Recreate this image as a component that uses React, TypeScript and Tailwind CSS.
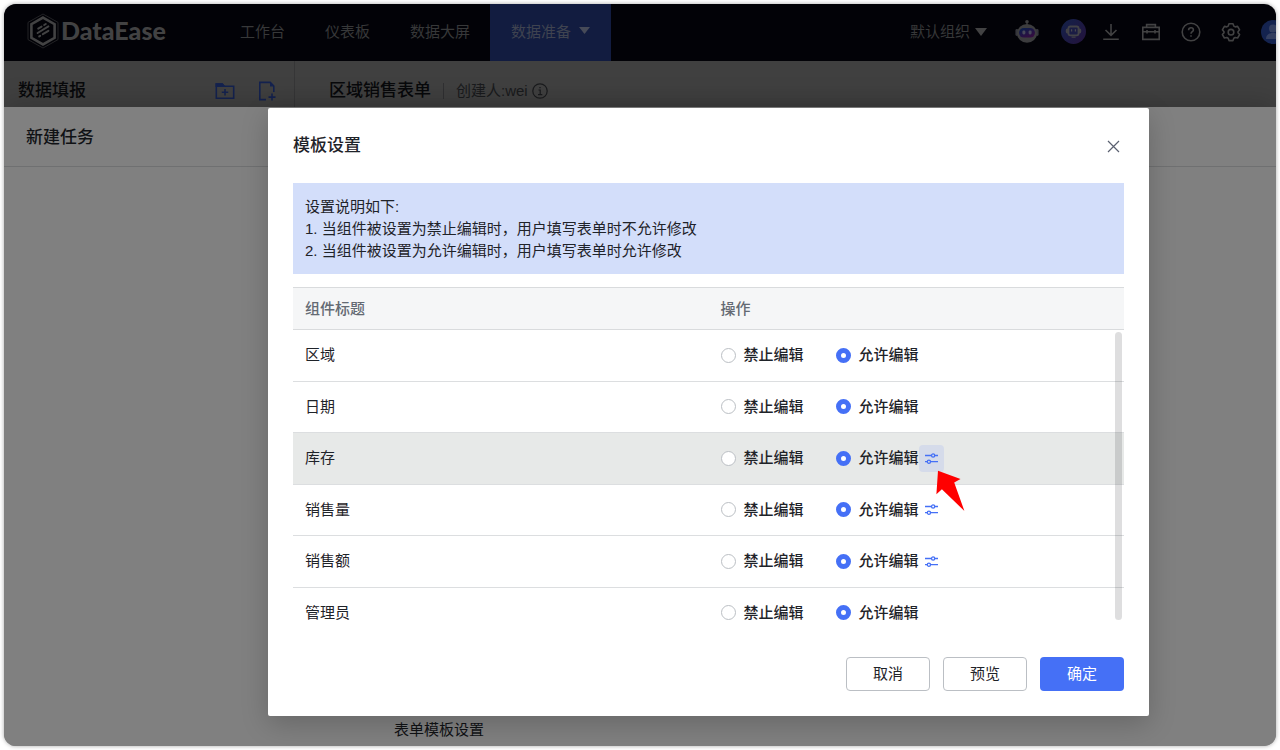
import React from 'react';

type Row = { title: string; configurable?: boolean; active?: boolean };

const ROWS: Row[] = [
  { title: '区域' },
  { title: '日期' },
  { title: '库存', configurable: true, active: true },
  { title: '销售量', configurable: true },
  { title: '销售额', configurable: true },
  { title: '管理员' },
];

const NAV_ITEMS = ['工作台', '仪表板', '数据大屏'];

function Logo() {
  return (
    <svg className="h-9 w-8 shrink-0" viewBox="0 0 32 36" fill="none">
      <path d="M16 1 31 9.4v17.2L16 35 1 26.6V9.4L16 1Z" stroke="#2b2b2d" strokeWidth="0.8" />
      <path d="M16 4.6 27.6 11.2v13.6L16 31.4 4.4 24.8V11.2L16 4.6Z" stroke="#424243" strokeWidth="2.6" />
      <g stroke="#424243" strokeWidth="2" strokeLinecap="round">
        <path d="m11.2 15.6 3.4-2M17.2 12l1.6-1M10.6 20l10.8-6.6M12.2 23.4l1-.6M15.8 21.2l5.6-3.4" />
      </g>
    </svg>
  );
}

function Caret({ className }: { className: string }) {
  return (
    <svg className={className} viewBox="0 0 12 8" fill="currentColor" preserveAspectRatio="none">
      <path d="M0 0h12L6 8 0 0Z" />
    </svg>
  );
}

function RobotIcon() {
  return (
    <svg className="size-6" viewBox="0 0 24 24" fill="none">
      <circle cx="12" cy="1.8" r="1.8" fill="#3c3c3e" />
      <path d="M11.4 3h1.2v3h-1.2z" fill="#3c3c3e" />
      <rect x="0.4" y="9" width="3" height="7" rx="1.4" fill="#34353b" />
      <rect x="20.6" y="9" width="3" height="7" rx="1.4" fill="#34353b" />
      <ellipse cx="12" cy="13.4" rx="10" ry="9.4" fill="#3c3c3e" />
      <rect x="4" y="8" width="16" height="9.6" rx="4.8" fill="url(#robot-face)" />
      <rect x="7.4" y="10.4" width="3" height="4" rx="1.3" fill="#48495a" />
      <rect x="13.6" y="10.4" width="3" height="4" rx="1.3" fill="#48495a" />
      <defs>
        <linearGradient id="robot-face" gradientUnits="userSpaceOnUse" x1="9" y1="8" x2="13" y2="18">
          <stop stopColor="#0c1d4a" />
          <stop offset="1" stopColor="#340c40" />
        </linearGradient>
      </defs>
    </svg>
  );
}

function ChatIcon() {
  return (
    <svg className="size-[25px]" viewBox="0 0 25 25" fill="none">
      <circle cx="12.5" cy="12.5" r="12.5" fill="url(#chat-bg)" />
      <rect x="4.8" y="9.4" width="15.4" height="5" rx="1.6" fill="#424247" />
      <rect x="6.6" y="6.6" width="11.8" height="10.6" rx="2.6" fill="#424247" />
      <rect x="8.4" y="8.4" width="8.2" height="7" rx="1.2" fill="#1a1c44" />
      <path d="M10.6 10.2v2.2M14.4 10.2v2.2" stroke="#48484e" strokeWidth="1.2" />
      <path d="M10.600 18.200h4" stroke="#424247" strokeWidth="1.2" />
      <defs>
        <linearGradient id="chat-bg" gradientUnits="userSpaceOnUse" x1="2" y1="4" x2="23" y2="21">
          <stop stopColor="#152048" />
          <stop offset="1" stopColor="#22143e" />
        </linearGradient>
      </defs>
    </svg>
  );
}

function LineIcon({ children }: { children: React.ReactNode }) {
  return (
    <svg className="size-5" viewBox="0 0 20 20" fill="none" stroke="currentColor" strokeWidth="1.6">
      {children}
    </svg>
  );
}

function SettingIcon() {
  return (
    <svg className="h-[13px] w-[15px]" viewBox="0 0 15 13" fill="none" stroke="#4570f6" strokeWidth="1.3">
      <path d="M1 3.5h6.4M10.8 3.5H14M1 9.7h2.2M6.6 9.7H14" />
      <circle cx="9.1" cy="3.5" r="1.6" />
      <circle cx="4.9" cy="9.7" r="1.6" />
    </svg>
  );
}

function Pointer() {
  return (
    <svg className="pointer-events-none absolute top-[25px] left-[17px] z-10 h-[42px] w-[29px]" viewBox="0 0 29 42">
      <path d="M2 .7 24.5 9l-6.3 3.4L28.4 41 5.9 19.3.4 24.3 2 .7Z" fill="#ff0000" />
    </svg>
  );
}

function Radio({ name, label, checked }: { name: string; label: string; checked?: boolean }) {
  return (
    <label className="flex items-center gap-2 font-medium">
      <input
        type="radio"
        name={name}
        defaultChecked={checked}
        className="size-[15px] shrink-0 appearance-none rounded-full border border-[#bbbfc4] bg-white checked:border-[5px] checked:border-[#4570f6]"
      />
      {label}
    </label>
  );
}

function TopBar() {
  return (
    <header className="flex h-[57px] shrink-0 items-center bg-[#020207] text-[15px] text-[#373839]">
      <div className="flex items-center gap-0.5 pb-1 pl-[23px] text-[#424243]">
        <Logo />
        <span className="font-['Lato'] text-[25px] leading-none font-black">DataEase</span>
      </div>
      <nav className="ml-auto flex h-full items-center">
        {NAV_ITEMS.map((item) => (
          <a key={item} href="#" className="px-5 whitespace-nowrap">
            {item}
          </a>
        ))}
        <a href="#" className="flex h-full items-center gap-2 bg-[#121c40] px-[21px] whitespace-nowrap text-[#3f4350]">
          数据准备
          <Caret className="mb-1 h-[7px] w-[11px] text-[#464a58]" />
        </a>
      </nav>
      <div className="ml-[299px] -mr-[9px] flex shrink-0 items-center pb-0.5 text-[#424243]">
        <button type="button" className="flex items-center gap-[5px] pt-0.5 whitespace-nowrap text-[#373839]">
          默认组织
          <Caret className="mb-0.5 h-2 w-3 text-[#424243]" />
        </button>
        <button type="button" className="ml-7" aria-label="助手">
          <RobotIcon />
        </button>
        <button type="button" className="ml-[22px]" aria-label="问数">
          <ChatIcon />
        </button>
        <div className="ml-[15px] flex items-center gap-5">
          <button type="button" aria-label="下载">
            <LineIcon>
              <path d="M10 2v11M4.5 8 10 13.4 15.5 8M2.2 17.2h15.6" />
            </LineIcon>
          </button>
          <button type="button" aria-label="工具箱">
            <LineIcon>
              <path d="M1.8 5.4h16.4v12H1.8zM5.6 5.4V2.6h8.8v2.8M1.8 9.8h16.4M6 8v3.6M14 8v3.6" />
            </LineIcon>
          </button>
          <button type="button" aria-label="帮助">
            <LineIcon>
              <circle cx="10" cy="10" r="8.8" />
              <path d="M7.6 8.2c0-1.5 1-2.5 2.4-2.5s2.4.9 2.4 2.2c0 1.8-2.4 1.9-2.4 3.9M10 13.2v1.6" />
            </LineIcon>
          </button>
          <button type="button" aria-label="设置">
            <LineIcon>
              <path
                d="M8 1.8h4l.8 2.3 1.4.8 2.4-.5 2 3.4-1.6 1.9v1l1.6 1.9-2 3.4-2.4-.5-1.4.8-.8 2.3H8l-.8-2.3-1.4-.8-2.4.5-2-3.4 1.600-1.900v-1L1.400 7.800l2-3.400 2.400.5 1.400-.8L8 1.800Z"
                strokeLinejoin="round"
              />
              <circle cx="10" cy="10.2" r="2.8" />
            </LineIcon>
          </button>
          <button type="button" aria-label="用户">
            <svg className="size-6" viewBox="0 0 24 24">
              <circle cx="12" cy="12" r="12" fill="#14234f" />
              <circle cx="12" cy="8.4" r="4" fill="#343f60" />
              <path d="M5 19c0-4 3-6 7-6s7 2 7 6Z" fill="#343f60" />
            </svg>
          </button>
        </div>
      </div>
    </header>
  );
}

function SubBar() {
  return (
    <div className="h-[46px] shrink-0 overflow-hidden bg-[#404040]">
      <div className="flex h-[60px]">
        <div className="flex w-[291px] shrink-0 items-center border-r border-[#363637] pr-[17px] pl-[14px]">
          <h2 className="text-[17px] font-medium text-[#08090b]">数据填报</h2>
          <div className="ml-auto flex items-center gap-[22px] text-[#14224f]">
            <button type="button" aria-label="新建文件夹">
              <LineIcon>
                <path d="M1.3 17.2V3h6l1.8 2.2h9.6v12Z" />
                <path d="M1.3 3h6l1.8 2.2H1.3Z" fill="currentColor" />
                <path d="M10 8v6.4M6.8 11.2h6.4" />
              </LineIcon>
            </button>
            <button type="button" aria-label="新建表单">
              <LineIcon>
                <path d="M9 18.6H2.8V1.4h10.4l3.6 3.6v6M15 12.6v7M11.5 16.1h7" />
                <path d="M13 1.4v4h3.8Z" fill="currentColor" stroke="none" />
              </LineIcon>
            </button>
          </div>
        </div>
        <div className="flex items-center pl-[34px] whitespace-nowrap">
          <h1 className="text-[17px] font-medium text-[#08090b]">区域销售表单</h1>
          <span className="mx-3 h-4 w-px bg-[#303032]" />
          <span className="text-[15px] text-[#1a1b1d]">创建人:wei</span>
          <svg className="ml-1 size-4 text-[#1a1b1d]" viewBox="0 0 16 16" fill="none" stroke="currentColor" strokeWidth="1.2">
            <circle cx="8" cy="8" r="7.2" />
            <path d="M6.5 7h1.7v4.5M6 11.6h4.3M7.3 4.6h1.4" />
          </svg>
        </div>
      </div>
    </div>
  );
}

function TemplateDialog() {
  return (
    <section
      role="dialog"
      aria-label="模板设置"
      className="absolute top-[104px] right-[127px] left-[264px] rounded-xs bg-white p-[25px] text-[15px] text-[#1f2329] shadow-[0_8px_28px_rgba(0,0,0,0.2)]"
    >
      <div className="flex h-[26px] items-center justify-between">
        <h2 className="text-[17px] leading-[26px] font-medium">模板设置</h2>
        <button type="button" aria-label="关闭" className="mr-1">
          <svg className="size-[13px]" viewBox="0 0 13 13" stroke="#5a6070" strokeWidth="1.2">
            <path d="m1 1 11 11M12 1 1 12" />
          </svg>
        </button>
      </div>

      <div className="mt-6 bg-[#d3defa] px-3 pt-[13px] pb-3 leading-[22px]">
        <p>设置说明如下:</p>
        <p>1. 当组件被设置为禁止编辑时，用户填写表单时不允许修改</p>
        <p>2. 当组件被设置为允许编辑时，用户填写表单时允许修改</p>
      </div>

      <div className="relative mt-[13px] h-[335px] overflow-hidden">
        <table className="h-[352px] w-full table-fixed border-separate border-spacing-0 text-left">
          <thead>
            <tr className="h-[43px] bg-[#f5f6f7] text-[#646a73]">
              <th className="border-y border-[#d9dbdd] px-3 pt-0.5 pb-0 font-medium">组件标题</th>
              <th className="border-y border-[#d9dbdd] px-3 pt-0.5 pb-0 font-medium">操作</th>
            </tr>
          </thead>
          <tbody>
            {ROWS.map((row) => (
              <tr key={row.title} className={row.active ? 'bg-[#e7e9e8]' : ''}>
                <td className="border-b border-[#dcdee0] px-3">{row.title}</td>
                <td className="border-b border-[#dcdee0] px-3">
                  <div className="flex h-[27px] items-center whitespace-nowrap">
                    <Radio name={row.title} label="禁止编辑" />
                    <div className="ml-8 flex items-center">
                      <Radio name={row.title} label="允许编辑" checked />
                      {row.configurable && (
                        <button
                          type="button"
                          aria-label="编辑设置"
                          className={`relative flex h-[27px] w-[25px] items-center justify-center rounded ${
                            row.active ? 'bg-[#d5dbea]' : ''
                          }`}
                        >
                          <SettingIcon />
                          {row.active && <Pointer />}
                        </button>
                      )}
                    </div>
                  </div>
                </td>
              </tr>
            ))}
          </tbody>
        </table>
        <div className="absolute top-[45px] right-[2px] bottom-[2px] w-[7px] rounded-full bg-[#1f2329]/15" />
      </div>

      <div className="mt-[35px] flex justify-end gap-[13px]">
        <button type="button" className="h-[34px] w-[84px] rounded border border-[#bbbfc4] bg-white">
          取消
        </button>
        <button type="button" className="h-[34px] w-[84px] rounded border border-[#bbbfc4] bg-white">
          预览
        </button>
        <button type="button" className="h-[34px] w-[84px] rounded bg-[#4570f6] text-white">
          确定
        </button>
      </div>
    </section>
  );
}

export default function App() {
  return (
    <div className="h-screen bg-white p-1 font-['Liberation_Sans','Noto_Sans_CJK_SC',sans-serif]">
      <div className="relative flex h-full flex-col overflow-hidden rounded-xl bg-[#808080] shadow-[0_0_4px_rgba(0,0,0,0.35)]">
        <TopBar />
        <SubBar />
        <main className="flex grow flex-col bg-[#808080] shadow-[0_-6px_24px_rgba(0,0,0,0.16)]">
          <div className="flex h-[60px] shrink-0 items-center border-b border-[#6f7071] px-[22px] pt-0.5">
            <h2 className="text-[17px] font-medium text-[#101215]">新建任务</h2>
          </div>
          <p className="mt-auto pb-[5px] pl-[390px] text-[15px] text-[#101215]">表单模板设置</p>
        </main>
        <TemplateDialog />
      </div>
    </div>
  );
}
